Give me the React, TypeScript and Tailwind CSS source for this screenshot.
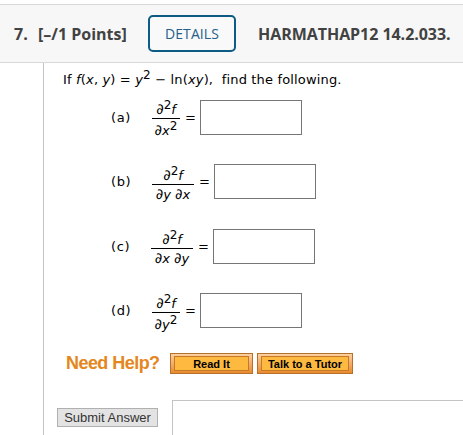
import type { ReactNode } from "react";

const Sup = () => <sup className="text-[12px] not-italic leading-none -top-[5px]">2</sup>;

const D = () => <span className="text-[14.5px] leading-none tracking-normal">∂</span>;

type PartProps = {
  label: string;
  denominator: ReactNode;
  className: string;
  fractionClass: string;
  denominatorClass: string;
};

const Part = ({ label, denominator, className, fractionClass, denominatorClass }: PartProps) => (
  <div className={`flex h-[35px] ${className}`}>
    <div className="w-[42px] shrink-0 pl-px pt-[9px] leading-[18px] tracking-[0.6px]">({label})</div>
    <div className={`flex shrink-0 flex-col items-center italic ${fractionClass}`}>
      <div className="h-[18px] whitespace-nowrap leading-[19px]">
        <D /><Sup />f
      </div>
      <div className="h-px w-full shrink-0 bg-black"></div>
      <div className={`h-[18px] whitespace-nowrap ${denominatorClass}`}>{denominator}</div>
    </div>
    <div className="w-[20px] shrink-0 pl-[5px] pt-[9px] leading-[18px]">=</div>
    <input className="h-[35px] w-[102px] shrink-0 border border-[#767676] bg-white px-1 outline-none" />
  </div>
);

const HelpButton = ({ children, className }: { children: ReactNode; className: string }) => (
  <button
    className={`h-[21px] border border-[#b5712c] bg-linear-to-b from-[#fbd0a0] to-[#e98b2b] px-[3px] py-[2px] ${className}`}
  >
    <span className="flex h-[15px] items-center justify-center whitespace-nowrap border border-[#c77a25] bg-[#fdb940] pt-px text-[11px] font-bold text-black">
      {children}
    </span>
  </button>
);

export default function App() {
  return (
    <div className="h-[435px] w-[463px] overflow-hidden bg-white font-['DejaVu_Sans',sans-serif] text-[13px] text-black">
      {/* Question header */}
      <div className="mt-1 flex h-[59px] items-center border-y border-[#d8d8d8] bg-[#f7f7f7] font-['Open_Sans',sans-serif] text-[16px] font-bold text-[#424242]">
        <span className="ml-[14px] w-[24px] whitespace-nowrap">7.</span>
        <span className="w-[110px] whitespace-nowrap">[–/1 Points]</span>
        <button className="h-[37px] w-[88px] rounded-[5px] border-2 border-[#0b5b85] bg-[#f9f9f9] text-[14px] font-medium tracking-[0.1px] text-[#24608a]">
          DETAILS
        </button>
        <span className="ml-[22px] whitespace-nowrap tracking-[-0.05px]">HARMATHAP12 14.2.033.</span>
      </div>

      {/* Question body */}
      <div className="ml-[43px] h-[372px] border-l border-[#c4c4c4]">
        <p className="h-[37px] whitespace-pre pl-[19px] pt-[7px] leading-[20px] tracking-[0.16px]">
          If <i>f</i>(<i>x</i>, <i>y</i>) = <i>y</i>
          <Sup /> − ln(<i>xy</i>),{"  "}find the following.
        </p>

        <div className="pl-[66px]">
          <Part
            label="a"
            denominator={<><D />x<Sup /></>}
            className="mb-[29px]"
            fractionClass="w-[28px]"
            denominatorClass="leading-[23px]"
          />
          <Part
            label="b"
            denominator={<><D />y <D />x</>}
            className="mb-[30px]"
            fractionClass="w-[42px] pt-[2px]"
            denominatorClass="leading-[20px]"
          />
          <Part
            label="c"
            denominator={<><D />x <D />y</>}
            className="mb-[29px]"
            fractionClass="w-[42px] pt-px -ml-px"
            denominatorClass="leading-[20px]"
          />
          <Part
            label="d"
            denominator={<><D />y<Sup /></>}
            className="mb-[25px]"
            fractionClass="w-[28px] pt-px"
            denominatorClass="leading-[23px]"
          />
        </div>

        <div className="flex h-[21px] items-center pl-[22px] font-['Liberation_Sans',sans-serif]">
          <span className="w-[104px] whitespace-nowrap text-[18px] font-bold tracking-[-0.55px] text-[#e48720]">
            Need Help?
          </span>
          <HelpButton className="w-[83px]">Read It</HelpButton>
          <HelpButton className="ml-[4px] w-[96px]">Talk to a Tutor</HelpButton>
        </div>

        <div className="mt-[26px] flex font-['Liberation_Sans',sans-serif]">
          <div className="w-[128px] shrink-0 pl-[13px] pt-[8px]">
            <button className="h-[19px] w-[101px] whitespace-nowrap border border-[#b0b0b0] bg-[#e3e3e3] text-[13px] leading-[17px] text-[#333]">
              Submit Answer
            </button>
          </div>
          <div className="h-[40px] flex-1 border-l border-t border-[#c4c4c4]"></div>
        </div>
      </div>
    </div>
  );
}
